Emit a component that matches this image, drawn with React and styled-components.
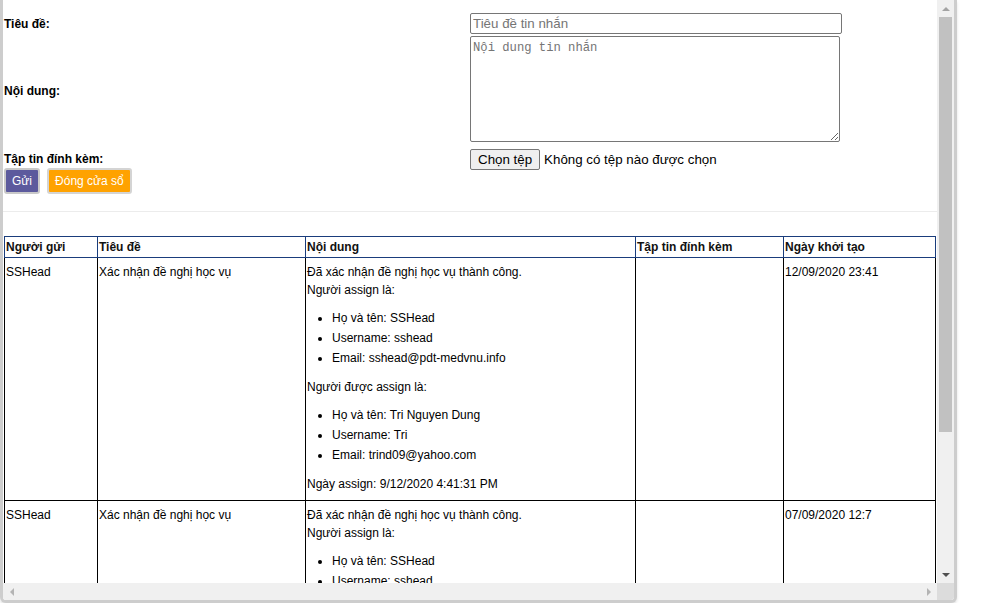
import React from 'react';
import styled, {createGlobalStyle} from 'styled-components';

const GlobalStyle = createGlobalStyle`
  html, body {
    margin: 0;
    padding: 0;
    background: #fff;
  }

  body {
    font-family: "Liberation Sans", Arial, sans-serif;
    font-size: 12px;
    color: #000;
  }
`;

const Frame = styled.div`
  box-sizing: border-box;
  width: 957px;
  height: 603px;
  border: 3px solid #cdcdcd;
  border-top: none;
  border-radius: 0 0 6px 6px;
  box-shadow: 0 2px 3px rgba(0, 0, 0, 0.12);
  display: flex;
  flex-direction: column;
  overflow: hidden;
  background: #fff;
`;

const Viewport = styled.div`
  flex: 1;
  display: flex;
  min-height: 0;
`;

const Content = styled.div`
  flex: 1;
  min-width: 0;
  overflow: hidden;
  padding-top: 13px;
`;

const VScroll = styled.div`
  width: 17px;
  background: #f0f0f0;
  display: flex;
  flex-direction: column;
`;

const HScroll = styled.div`
  height: 17px;
  display: flex;
  background: #f0f0f0;
`;

const HTrack = styled.div`
  flex: 1;
  display: flex;
  justify-content: space-between;
  align-items: center;
`;

const Corner = styled.div`
  width: 17px;
  background: #dcdcdc;
`;

const ArrowBox = styled.div`
  width: 17px;
  height: 17px;
  display: flex;
  align-items: center;
  justify-content: center;
`;

const Triangle = styled.span`
  width: 0;
  height: 0;
  border-style: solid;
  ${({dir, color}) => {
    if (dir === 'up') return `border-width: 0 4px 4px 4px; border-color: transparent transparent ${color} transparent;`;
    if (dir === 'down') return `border-width: 4px 4px 0 4px; border-color: ${color} transparent transparent transparent;`;
    if (dir === 'left') return `border-width: 4px 4px 4px 0; border-color: transparent ${color} transparent transparent;`;
    return `border-width: 4px 0 4px 4px; border-color: transparent transparent transparent ${color};`;
  }}
`;

const Thumb = styled.div`
  margin: 0 2px;
  height: 415px;
  background: #c1c1c1;
`;

const VSpacer = styled.div`
  flex: 1;
`;

const FormGrid = styled.div`
  display: grid;
  grid-template-columns: 467px 1fr;
  grid-template-rows: 21px 106px 26px;
  row-gap: 2px;
  align-items: center;
`;

const Label = styled.div`
  font-weight: bold;
  padding-left: 1px;
  padding-top: ${({offset}) => offset || 0}px;
`;

const TextInput = styled.input`
  box-sizing: border-box;
  width: 372px;
  height: 21px;
  margin: 0;
  padding: 1px 2px;
  border: 1px solid #767676;
  border-radius: 2px;
  font-family: "Liberation Sans", Arial, sans-serif;
  font-size: 13.33px;

  &::placeholder {
    color: #757575;
  }
`;

const TextArea = styled.textarea`
  box-sizing: border-box;
  width: 370px;
  height: 106px;
  margin: 0;
  padding: 4px 2px 2px;
  border: 1px solid #767676;
  border-radius: 2px;
  font-family: "Liberation Mono", "DejaVu Sans Mono", monospace;
  font-size: 12.2px;
  display: block;

  &::placeholder {
    color: #757575;
  }
`;

const FileRow = styled.div`
  align-self: end;
  display: flex;
  align-items: center;
  gap: 4px;
  font-size: 13.33px;
`;

const FileButton = styled.span`
  box-sizing: border-box;
  height: 21px;
  line-height: 19px;
  padding: 0 7px;
  background: #efefef;
  border: 1px solid #767676;
  border-radius: 2px;
`;

const Actions = styled.div`
  display: flex;
  gap: 7px;
  padding-left: 1px;
  margin-top: -2px;
`;

const ActionButton = styled.button`
  box-sizing: border-box;
  height: 26px;
  padding: 0 6px;
  border: 2px solid ${({bordercolor}) => bordercolor};
  border-radius: 3px;
  background: ${({bg}) => bg};
  color: #fff;
  font-family: "Liberation Sans", Arial, sans-serif;
  font-size: 12px;
`;

const Divider = styled.hr`
  margin: 17px 0 24px;
  border: none;
  border-top: 1px solid #ececec;
`;

const Table = styled.table`
  border-collapse: collapse;
  width: 931px;
  margin-left: 1px;
  table-layout: fixed;
  line-height: 18px;
`;

const HeadCell = styled.th`
  border: 1px solid #1a3d7c;
  padding: 1px 1px;
  text-align: left;
  font-weight: bold;
  color: #111;
`;

const Cell = styled.td`
  border: 1px solid #000;
  padding: 5px 1px 7px;
  vertical-align: top;
`;

const List = styled.ul`
  margin: 9px 0 10px;
  padding-left: 25px;

  & > li {
    line-height: 20px;
  }
`;

const columns = [93, 208, 330, 148, 152];
const headers = ['Người gửi', 'Tiêu đề', 'Nội dung', 'Tập tin đính kèm', 'Ngày khởi tạo'];

const messages = [
  {
    sender: 'SSHead',
    title: 'Xác nhận đề nghị học vụ',
    date: '12/09/2020 23:41',
    assigner: ['Họ và tên: SSHead', 'Username: sshead', 'Email: sshead@pdt-medvnu.info'],
    assignee: ['Họ và tên: Tri Nguyen Dung', 'Username: Tri', 'Email: trind09@yahoo.com'],
    assignedAt: '9/12/2020 4:41:31 PM',
  },
  {
    sender: 'SSHead',
    title: 'Xác nhận đề nghị học vụ',
    date: '07/09/2020 12:7',
    assigner: ['Họ và tên: SSHead', 'Username: sshead', 'Email: sshead@pdt-medvnu.info'],
    assignee: ['Họ và tên: Tri Nguyen Dung', 'Username: Tri', 'Email: trind09@yahoo.com'],
    assignedAt: '7/9/2020 12:07:10 PM',
  },
];

export default function App() {
  return (
    <>
      <GlobalStyle/>
      <Frame>
        <Viewport>
          <Content>
            <FormGrid>
              <Label>Tiêu đề:</Label>
              <div><TextInput placeholder="Tiêu đề tin nhắn"/></div>
              <Label offset={4}>Nội dung:</Label>
              <div><TextArea placeholder="Nội dung tin nhắn"/></div>
              <Label offset={3}>Tập tin đính kèm:</Label>
              <FileRow>
                <FileButton>Chọn tệp</FileButton>
                <span>Không có tệp nào được chọn</span>
              </FileRow>
            </FormGrid>
            <Actions>
              <ActionButton bg="#5c5a9d" bordercolor="#c9c9c9">Gửi</ActionButton>
              <ActionButton bg="#ffa200" bordercolor="#d4d4d4">Đóng cửa sổ</ActionButton>
            </Actions>
            <Divider/>
            <Table>
              <colgroup>
                {columns.map((w, i) => <col key={i} style={{width: w}}/>)}
              </colgroup>
              <thead>
              <tr>
                {headers.map(h => <HeadCell key={h}>{h}</HeadCell>)}
              </tr>
              </thead>
              <tbody>
              {messages.map((m, i) => (
                <tr key={i}>
                  <Cell>{m.sender}</Cell>
                  <Cell>{m.title}</Cell>
                  <Cell>
                    Đã xác nhận đề nghị học vụ thành công.<br/>
                    Người assign là:
                    <List>
                      {m.assigner.map(x => <li key={x}>{x}</li>)}
                    </List>
                    Người được assign là:
                    <List>
                      {m.assignee.map(x => <li key={x}>{x}</li>)}
                    </List>
                    Ngày assign: {m.assignedAt}
                  </Cell>
                  <Cell/>
                  <Cell>{m.date}</Cell>
                </tr>
              ))}
              </tbody>
            </Table>
          </Content>
          <VScroll>
            <ArrowBox><Triangle dir="up" color="#a3a3a3"/></ArrowBox>
            <Thumb/>
            <VSpacer/>
            <ArrowBox><Triangle dir="down" color="#505050"/></ArrowBox>
          </VScroll>
        </Viewport>
        <HScroll>
          <HTrack>
            <ArrowBox><Triangle dir="left" color="#b4b4b4"/></ArrowBox>
            <ArrowBox><Triangle dir="right" color="#b4b4b4"/></ArrowBox>
          </HTrack>
          <Corner/>
        </HScroll>
      </Frame>
    </>
  );
}
